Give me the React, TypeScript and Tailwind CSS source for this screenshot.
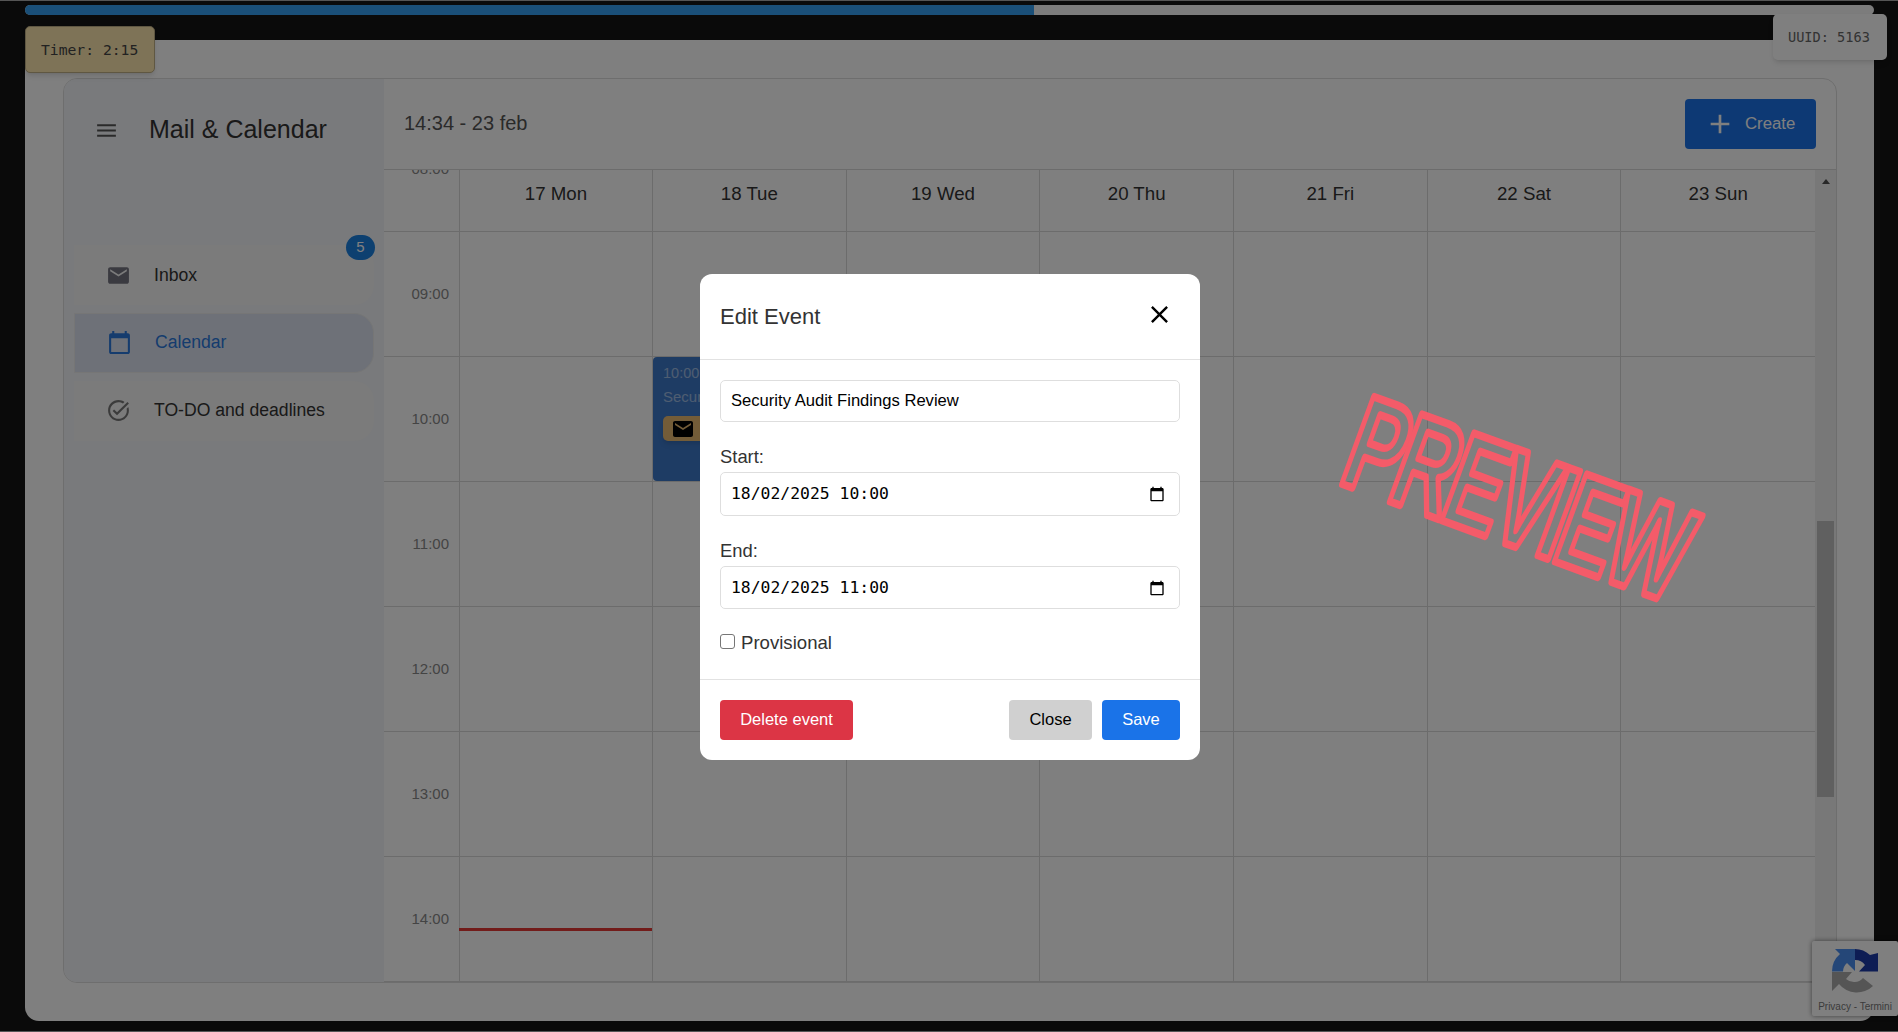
import React from "react";

const HOURS = ["09:00", "10:00", "11:00", "12:00", "13:00", "14:00"];
const DAYS = ["17 Mon", "18 Tue", "19 Wed", "20 Thu", "21 Fri", "22 Sat", "23 Sun"];

const MAIL = "M20 4H4c-1.1 0-1.99.9-1.99 2L2 18c0 1.1.9 2 2 2h16c1.1 0 2-.9 2-2V6c0-1.1-.9-2-2-2zm0 4-8 5-8-5V6l8 5 8-5v2z";
const CALENDAR = "M20 3h-1V1h-2v2H7V1H5v2H4c-1.1 0-2 .9-2 2v16c0 1.1.9 2 2 2h16c1.1 0 2-.9 2-2V5c0-1.1-.9-2-2-2zm0 18H4V8h16v13z";
const TASK = "M22 5.18 10.59 16.6l-4.24-4.24 1.41-1.41 2.83 2.83 10-10L22 5.18zm-2.21 5.04c.13.57.21 1.17.21 1.78 0 4.42-3.58 8-8 8s-8-3.58-8-8 3.58-8 8-8c1.58 0 3.04.46 4.28 1.25l1.44-1.44C16.1 2.67 14.13 2 12 2 6.48 2 2 6.48 2 12s4.48 10 10 10 10-4.48 10-10c0-1.19-.22-2.33-.6-3.39l-1.61 1.61z";
const MENU = "M3 18h18v-2H3v2zm0-5h18v-2H3v2zm0-7v2h18V6H3z";
const CLOSE = "M19 6.41 17.59 5 12 10.59 6.41 5 5 6.41 10.59 12 5 17.59 6.41 19 12 13.41 17.59 19 19 17.59 13.41 12z";
const PLUS = "M19 13h-6v6h-2v-6H5v-2h6V5h2v6h6v2z";

const Icon = ({d, className}: {d: string; className: string}) => (
	<svg viewBox="0 0 24 24" fill="currentColor" className={className}>
		<path d={d} />
	</svg>
);

const DateField = ({value, className}: {value: string; className: string}) => (
	<div className={`flex items-center rounded-[5px] border border-[#dedede] pl-[10px] pr-[14px] ${className}`}>
		<input
			type="text"
			readOnly
			value={value}
			className="min-w-0 flex-1 bg-transparent text-[16.4px] text-black outline-none [font-family:'DejaVu_Sans_Mono',monospace]"
		/>
		<Icon d={CALENDAR} className="h-4 w-4 text-black" />
	</div>
);

const Recaptcha = () => (
	<svg viewBox="0 0 46 46" className="h-[46px] w-[46px]">
		<path d="M0 22.5H11A12 12 0 0 1 15 14L23 22V0H3L8 5A23 23 0 0 0 0 22.5Z" fill="#4a8ff0" />
		<path d="M23 0A23 23 0 0 1 38 6L46 4V22.5H27L33 16A12 12 0 0 0 23 11Z" fill="#1c3aa9" />
		<path d="M0 23V42L7 35A23 23 0 0 0 41 37L31 29A12 12 0 0 1 14 30L20 23Z" fill="#ababab" />
	</svg>
);

export default function App() {
	return (
		<div className="relative flex h-[1032px] w-full flex-col overflow-hidden border-y border-[#555] bg-[#141414] pl-[25px] pr-[24px] pt-[4px] [font-family:'Liberation_Sans',Arial,sans-serif]">
			{/* Progress bar */}
			<div className="h-[10px] shrink-0 overflow-hidden rounded-full bg-[#f8f8f8]">
				<div className="h-full w-[1009px] bg-[#349ef0]" />
			</div>

			{/* Page card */}
			<div className="mt-[25px] h-[981px] shrink-0 rounded-b-[14px] bg-white pb-[38px] pl-[38px] pr-[37px] pt-[38px]">
				<div className="flex h-full overflow-hidden rounded-[14px] border border-[#dcdcdc]">
					{/* Sidebar */}
					<aside className="w-[320px] shrink-0 bg-[#f2f4f8] pr-[10px] pl-[10px]">
						<div className="flex h-[102px] items-center pl-[20px] text-[#555]">
							<Icon d={MENU} className="h-[25px] w-[25px]" />
							<span className="ml-[30px] text-[25px] text-[#333]">Mail &amp; Calendar</span>
						</div>
						<nav className="mt-[64px] flex flex-col gap-[8px]">
							<div className="relative flex h-[60px] items-center rounded-r-[20px] bg-[#f6f6f6] pl-[32px] text-[#333]">
								<Icon d={MAIL} className="h-[25px] w-[25px] text-[#747480]" />
								<span className="ml-[23px] text-[17.6px]">Inbox</span>
								<span className="absolute -right-[1px] -top-[10px] flex h-[25px] w-[29px] items-center justify-center rounded-full bg-[#1a80e0] text-[15px] text-white">
									5
								</span>
							</div>
							<div className="flex h-[60px] items-center rounded-r-[20px] border border-[#ececec] bg-[#dce3f1] pb-[2px] pl-[32px] text-[#2a78dc]">
								<Icon d={CALENDAR} className="h-[25px] w-[25px]" />
								<span className="ml-[23px] text-[17.6px]">Calendar</span>
							</div>
							<div className="flex h-[60px] items-center rounded-r-[20px] bg-[#f6f6f6] pb-[2px] pl-[32px] text-[#333]">
								<Icon d={TASK} className="h-[25px] w-[25px] text-[#777]" />
								<span className="ml-[23px] text-[17.6px]">TO-DO and deadlines</span>
							</div>
						</nav>
					</aside>

					<main className="flex min-w-0 flex-1 flex-col">
						{/* Header */}
						<header className="flex h-[91px] shrink-0 items-center justify-between border-b border-[#d8d8d8] pl-[20px] pr-[20px]">
							<span className="-mt-[2px] text-[20px] text-[#555]">14:34 - 23 feb</span>
							<button className="flex h-[50px] w-[131px] items-center rounded-[4px] bg-[#1a73e8] pl-[19px] text-[16.8px] text-white">
								<Icon d={PLUS} className="h-[32px] w-[32px] text-white" />
								<span className="ml-[9px]">Create</span>
							</button>
						</header>

						{/* Week grid */}
						<div className="flex min-h-0 flex-1 overflow-hidden">
							<div className="w-[76px] shrink-0 overflow-hidden border-r border-[#d8d8d8]">
								<div className="-mt-[63px]">
									{["08:00", ...HOURS].map((h) => (
										<div
											key={h}
											className="flex h-[125px] items-center justify-end border-b border-[#d8d8d8] pr-[10px] text-[15px] text-[#888]">
											{h}
										</div>
									))}
								</div>
							</div>

							<div className="min-w-0 flex-1">
								<div className="grid h-[62px] grid-cols-[193px_repeat(6,1fr)] border-b border-[#d8d8d8]">
									{DAYS.map((d) => (
										<div
											key={d}
											className="flex items-center justify-center border-r border-[#d8d8d8] pb-[12px] text-[18.7px] text-[#333] last:border-r-0">
											{d}
										</div>
									))}
								</div>
								{HOURS.map((h) => (
									<div
										key={h}
										className="grid h-[125px] grid-cols-[193px_repeat(6,1fr)] border-b border-[#d8d8d8]">
										{DAYS.map((d) => (
											<div
												key={d}
												className="relative border-r border-[#d8d8d8] last:border-r-0">
												{d === "18 Tue" && h === "10:00" && (
													<div className="absolute inset-0 overflow-hidden rounded-[4px] bg-[#3c78c8] pl-[10px] pt-[7px] text-white/50">
														<div className="text-[14.5px] leading-[18px]">10:00</div>
														<div className="mt-[6px] whitespace-nowrap text-[15px] leading-[18px]">
															Security Audit Findings Review
														</div>
														<div className="mt-[10px] flex h-[25px] w-[170px] items-center rounded-[5px] bg-[#e6b870] pl-[8px] shadow-md">
															<Icon d={MAIL} className="h-6 w-6 text-black" />
														</div>
													</div>
												)}
												{d === "17 Mon" && h === "14:00" && (
													<div className="absolute -left-[1px] right-0 top-[71px] h-[3px] bg-[#e53935]" />
												)}
											</div>
										))}
									</div>
								))}
							</div>

							{/* Scrollbar */}
							<div className="relative w-[21px] shrink-0 bg-[#f1f1f1]">
								<div className="mx-auto mt-[9px] h-0 w-0 border-x-[4px] border-b-[5px] border-x-transparent border-b-[#505050]" />
								<div className="mx-auto mt-[337px] h-[276px] w-[17px] bg-[#c1c1c1]" />
							</div>
						</div>
					</main>
				</div>
			</div>

			{/* Floating badges */}
			<div className="absolute left-[25px] top-[25px] flex h-[47px] w-[130px] items-center rounded-[5px] border border-[#bfae84] bg-[#fce6ae] pl-[15px] pt-[1px] text-[14.7px] text-[#444] shadow-md [font-family:'DejaVu_Sans_Mono',monospace]">
				Timer: 2:15
			</div>
			<div className="absolute left-[1773px] top-[13px] flex h-[46px] w-[114px] items-center rounded-[5px] bg-white pl-[15px] text-[13.6px] text-[#666] shadow-md [font-family:'DejaVu_Sans_Mono',monospace]">
				UUID: 5163
			</div>
			<div className="absolute left-[1812px] top-[940px] flex h-[75px] w-[86px] flex-col items-center rounded-[2px] bg-white pt-[8px] shadow-[0_0_5px_rgba(0,0,0,0.5)]">
				<Recaptcha />
				<div className="mt-[5px] whitespace-nowrap text-[10px] leading-[14px] text-[#777]">Privacy - Termini</div>
			</div>

			{/* Modal backdrop */}
			<div className="absolute inset-0 flex justify-center bg-black/50 pl-[2px] pt-[273px]">
				<div className="h-[486px] w-[500px] overflow-hidden rounded-[12px] bg-white text-[#333]">
					<div className="flex h-[86px] items-center justify-between border-b border-[#e2e2e2] pl-[20px] pr-[26px]">
						<span className="text-[22px]">Edit Event</span>
						<Icon d={CLOSE} className="-mt-[5px] h-[29px] w-[29px] text-black" />
					</div>
					<div className="h-[319px] px-[20px] pt-[20px]">
						<input
							type="text"
							readOnly
							value="Security Audit Findings Review"
							className="h-[42px] w-full rounded-[5px] border border-[#dedede] px-[10px] text-[16.6px] text-black outline-none"
						/>
						<div className="mt-[22px] pb-[2px] text-[18.4px] leading-[26px]">Start:</div>
						<DateField value="18/02/2025 10:00" className="h-[44px]" />
						<div className="mt-[22px] pb-[2px] text-[18.4px] leading-[26px]">End:</div>
						<DateField value="18/02/2025 11:00" className="h-[43px] pt-[1px]" />
						<label className="mt-[20px] flex items-center text-[18.6px] leading-[27px]">
							<input
								type="checkbox"
								className="-mt-[3px] mr-[6px] h-[15px] w-[15px] appearance-none rounded-[3px] border border-[#767676] bg-white"
							/>
							Provisional
						</label>
					</div>
					<div className="flex h-[81px] items-center border-t border-[#e2e2e2] px-[20px] text-[16.5px]">
						<button className="h-[40px] w-[133px] rounded-[4px] bg-[#dc3545] pb-[1px] text-white">Delete event</button>
						<button className="ml-auto h-[40px] w-[83px] rounded-[4px] bg-[#d0d0d0] pb-[1px] text-black">Close</button>
						<button className="ml-[10px] h-[40px] w-[78px] rounded-[4px] bg-[#1a73e8] pb-[1px] text-white">Save</button>
					</div>
				</div>
			</div>

			{/* Preview stamp */}
			<svg className="pointer-events-none absolute left-[1318px] top-[346px] h-[300px] w-[400px]">
				<g transform="translate(200,150) rotate(20) scale(0.62,1)">
					<text
						y="48"
						textAnchor="middle"
						fontSize="135"
						fontWeight="bold"
						letterSpacing="-8"
						fontFamily="'Liberation Sans', sans-serif"
						fill="none"
						stroke="#f45b69"
						strokeWidth="6.5"
						strokeLinejoin="round"
						vectorEffect="non-scaling-stroke">
						PREVIEW
					</text>
				</g>
			</svg>
		</div>
	);
}
